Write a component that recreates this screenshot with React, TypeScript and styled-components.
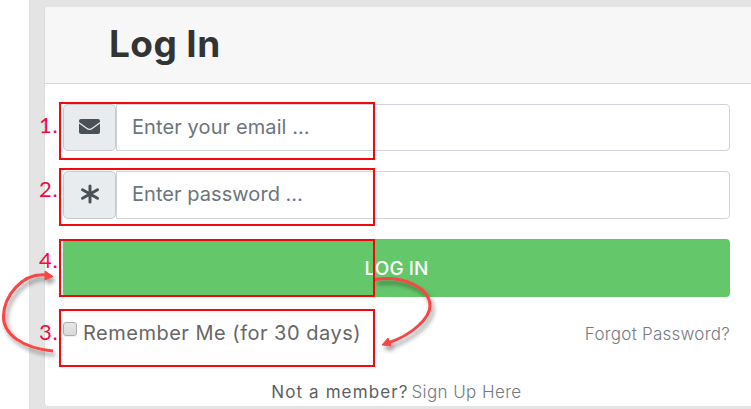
import React from "react";
import styled, { createGlobalStyle } from "styled-components";

const GlobalStyle = createGlobalStyle`
  * { box-sizing: border-box; }
  html, body { margin: 0; height: 409px; overflow: hidden; background: #fff; }
  body { font-family: Inter, "Open Sans", sans-serif; }
`;

const Page = styled.div`
  position: relative;
  height: 409px;
  padding-left: 29px;
  overflow: hidden;
`;

const Backdrop = styled.main`
  height: 100%;
  padding: 7px 0 3px 15px;
  background: #e4e4e4;
`;

const Card = styled.section`
  height: 399px;
  border: 0 solid #dcdcdc;
  border-left-width: 1px;
  border-radius: 4px 0 0 4px;
  background: #fff;
  overflow: hidden;
`;

const Header = styled.header`
  height: 77px;
  padding-left: 64px;
  background: #f7f7f7;
  border-bottom: 1px solid #d8d8d8;
`;

const Title = styled.h1`
  margin: 0;
  font-size: 37px;
  line-height: 74px;
  font-weight: 700;
  letter-spacing: 0.4px;
  color: #333;
`;

const Form = styled.form`
  padding: 20px 21px 0 18px;
`;

const Field = styled.div<{ $height: number; $gap: number }>`
  display: flex;
  height: ${(p) => p.$height}px;
  margin-bottom: ${(p) => p.$gap}px;
`;

const Addon = styled.span`
  display: flex;
  align-items: center;
  justify-content: center;
  width: 53px;
  padding-bottom: 2px;
  border: 1px solid #c5cace;
  border-radius: 5px;
  background: #e9ecef;
`;

const Input = styled.input<{ $tracking: number }>`
  flex: 1;
  min-width: 0;
  padding: 0 15px 2px;
  border: 1px solid #ced4da;
  border-radius: 0 4px 4px 0;
  background: #fff;
  font: 400 20px Inter, sans-serif;
  letter-spacing: ${(p) => p.$tracking}px;
  outline: 0;
  &::placeholder { color: #6c757d; opacity: 1; }
`;

const Submit = styled.button`
  display: block;
  width: 100%;
  height: 58px;
  padding: 1px 0 0;
  border: 0;
  border-radius: 4px;
  background: #64c76a;
  color: #fff;
  font: 500 19px/57px Inter, sans-serif;
  letter-spacing: 0.1px;
`;

const Options = styled.div`
  display: flex;
  justify-content: space-between;
  align-items: center;
  height: 74px;
`;

const Remember = styled.label`
  display: flex;
  align-items: center;
  gap: 6px;
  margin-top: -2px;
  color: #666;
  font-size: 20px;
  letter-spacing: 0.5px;
  white-space: nowrap;
`;

const Checkbox = styled.input`
  appearance: none;
  width: 14px;
  height: 14px;
  margin: -8px 0 0;
  border: 1px solid #adadad;
  border-radius: 3px;
  background: linear-gradient(#e7e7e7, #dadada);
  box-shadow: 0 1px 1px #0001;
`;

const Link = styled.a<{ $tracking: number }>`
  color: #727b83;
  font-size: 17px;
  font-weight: 300;
  letter-spacing: ${(p) => p.$tracking}px;
  white-space: nowrap;
`;

const Signup = styled.p`
  display: flex;
  justify-content: center;
  gap: 3px;
  margin: 11px 0 0;
  line-height: 20px;
`;

const Question = styled.span`
  color: #5c6064;
  font-size: 17px;
  font-weight: 400;
  letter-spacing: 1.1px;
`;

const Highlight = styled.div<{ $top: number }>`
  position: absolute;
  left: 59px;
  top: ${(p) => p.$top}px;
  width: 316px;
  height: 58px;
  border: 2px solid #f4080b;
  pointer-events: none;
`;

const Step = styled.span<{ $top: number }>`
  position: absolute;
  left: 39px;
  top: ${(p) => p.$top}px;
  color: #f70943;
  font: 400 22px/24px Lato, sans-serif;
  letter-spacing: 0.8px;
`;

const Arrows = styled.svg`
  position: absolute;
  inset: 0;
  pointer-events: none;
`;

const steps = [
  { label: "1.", top: 113, box: 102 },
  { label: "2.", top: 177, box: 168 },
  { label: "4.", top: 248, box: 239 },
  { label: "3.", top: 320, box: 309 },
];

function EnvelopeIcon() {
  return (
    <svg width="21" height="15" viewBox="0 0 21 15" fill="#495057">
      <path d="M2 0H19Q21 0 21 2V3L13 8.8Q10.5 10.6 8 8.8L0 3V2Q0 0 2 0Z" />
      <path d="M0 4.6L7.2 9.8Q10.5 12.2 13.8 9.8L21 4.6V13Q21 15 19 15H2Q0 15 0 13Z" />
    </svg>
  );
}

function AsteriskIcon() {
  return (
    <svg width="20" height="20" viewBox="0 0 20 20" stroke="#495057" strokeWidth="3" strokeLinecap="round">
      <path d="M10 2V18M2.5 5.8L17.5 14.2M2.5 14.2L17.5 5.8" />
    </svg>
  );
}

export default function App() {
  return (
    <>
      <GlobalStyle />
      <Page>
        <Backdrop>
          <Card>
            <Header><Title>Log In</Title></Header>
            <Form>
              <Field $height={47} $gap={20}>
                <Addon><EnvelopeIcon /></Addon>
                <Input $tracking={0.1} placeholder="Enter your email …" />
              </Field>
              <Field $height={48} $gap={20}>
                <Addon><AsteriskIcon /></Addon>
                <Input $tracking={0.05} type="text" placeholder="Enter password …" />
              </Field>
              <Submit type="button">LOG IN</Submit>
              <Options>
                <Remember><Checkbox type="checkbox" />Remember Me (for 30 days)</Remember>
                <Link $tracking={0.25}>Forgot Password?</Link>
              </Options>
              <Signup>
                <Question>Not a member?</Question>
                <Link $tracking={0.4}>Sign Up Here</Link>
              </Signup>
            </Form>
          </Card>
        </Backdrop>
        {steps.map((s) => (
          <React.Fragment key={s.label}>
            <Highlight $top={s.box} />
            <Step $top={s.top}>{s.label}</Step>
          </React.Fragment>
        ))}
        <Arrows width="751" height="409" viewBox="0 0 751 409" fill="none">
          <defs>
            <filter id="shadow" x="-20%" y="-20%" width="150%" height="150%">
              <feDropShadow dx="2.5" dy="4" stdDeviation="2" floodColor="#000" floodOpacity="0.4" />
            </filter>
          </defs>
          <g filter="url(#shadow)" stroke="#fa4545" strokeWidth="3">
            <path d="M53 351C22 348 3 334 3.5 316C4 297 21 273 46 275" />
            <path d="M45 271L53 276.500L45 280Z" fill="#fa4545" strokeWidth="1" />
          </g>
          <g filter="url(#shadow)" stroke="#fa4545" strokeWidth="3">
            <path d="M375 279.500C404 275 430 288 430 306C430 318 412 335 388 343" />
            <path d="M388 338L382 345L391 346Z" fill="#fa4545" strokeWidth="1" />
          </g>
        </Arrows>
      </Page>
    </>
  );
}
